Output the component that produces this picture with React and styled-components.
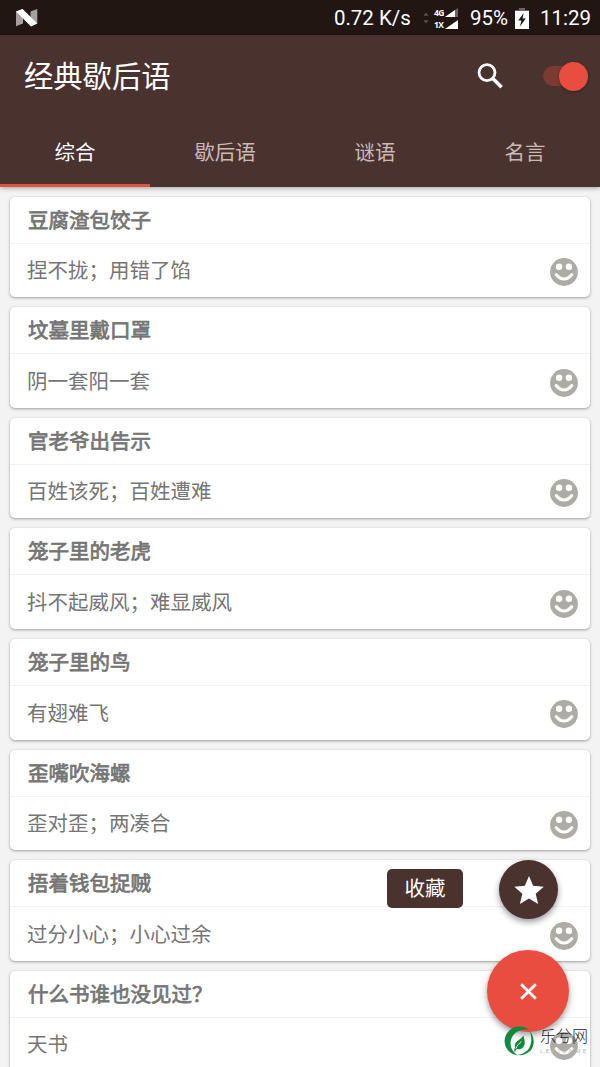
import React from 'react';
import styled, { createGlobalStyle } from 'styled-components';

const riddles = [
  { id: 1, title: '豆腐渣包饺子', answer: '捏不拢；用错了馅' },
  { id: 2, title: '坟墓里戴口罩', answer: '阴一套阳一套' },
  { id: 3, title: '官老爷出告示', answer: '百姓该死；百姓遭难' },
  { id: 4, title: '笼子里的老虎', answer: '抖不起威风；难显威风' },
  { id: 5, title: '笼子里的鸟', answer: '有翅难飞' },
  { id: 6, title: '歪嘴吹海螺', answer: '歪对歪；两凑合' },
  { id: 7, title: '捂着钱包捉贼', answer: '过分小心；小心过余' },
  { id: 8, title: '什么书谁也没见过？', answer: '天书' },
];

const tabs = ['综合', '歇后语', '谜语', '名言'];

const NougatIcon = () => (
  <svg width="22" height="18" viewBox="0 0 22 18">
    <path d="M0 2.6 L7 0 V14.6 L0 17.3Z" fill="#a5a09d" />
    <path d="M14.5 2.6 L21.3 0 V14.6 L14.5 17.3Z" fill="#a5a09d" />
    <path d="M0 2.6 L6.6 0 L21.3 14.6 L15 17.6Z" fill="#fff" />
  </svg>
);

const TrafficIcon = () => (
  <svg width="6" height="12" viewBox="0 0 6 12">
    <path d="M3 0.5 L5.6 3.8 H0.4Z M3 11.5 L5.6 8.2 H0.4Z" fill="#5b514d" />
  </svg>
);

const SignalIcon = ({ weak }) => (
  <svg width="13" height="9" viewBox="0 0 13 9">
    <path d="M13 0 V9 H0Z" fill={weak ? '#6d6461' : '#fff'} />
    {weak && <path d="M10 2.1 V9 H0Z" fill="#fff" />}
  </svg>
);

const BatteryIcon = () => (
  <svg width="14" height="21" viewBox="0 0 14 21">
    <path d="M4 0 H10 V2 H14 V4 H0 V2 H4Z" fill="#6d6461" />
    <path d="M0 3 H14 V21 H0Z" fill="#fff" />
    <path d="M8.6 5 L3.3 12.6 H6.4 L5 18.4 L10.7 10.6 H7.6Z" fill="#211612" />
  </svg>
);

const SearchIcon = () => (
  <svg width="26" height="26" viewBox="0 0 26 26" fill="none" stroke="#fff">
    <circle cx="10" cy="9.6" r="8" strokeWidth="2.8" />
    <path d="M15.6 15.2 L24.6 24.2" strokeWidth="3.6" />
  </svg>
);

const SmileIcon = () => (
  <svg width="28" height="28" viewBox="0 0 28 28">
    <circle cx="14" cy="14" r="13.9" fill="#acaba5" />
    <circle cx="9.1" cy="8.8" r="3.2" fill="#fff" />
    <circle cx="18.9" cy="8.8" r="3.2" fill="#fff" />
    <path d="M6.2 16.6 Q14 25.4 21.8 16.6" fill="none" stroke="#fff" strokeWidth="3.1" strokeLinecap="round" />
  </svg>
);

const StarIcon = () => (
  <svg width="30" height="28" viewBox="2 2 20 19">
    <path d="M12 17.27 18.18 21l-1.64-7.03L22 9.24l-7.19-.61L12 2 9.19 8.63 2 9.24l5.46 4.73L5.82 21z" fill="#fff" />
  </svg>
);

const CloseIcon = () => (
  <svg width="17" height="17" viewBox="0 0 17 17" stroke="#fff" strokeWidth="2.8">
    <path d="M1.2 1.2 L15.8 15.8 M15.8 1.2 L1.2 15.8" />
  </svg>
);

const LeafLogo = () => (
  <svg width="30" height="30" viewBox="0 0 30 30">
    <path d="M25 3.8 C16.4 -2.6 4.4 1 1.2 11 C-1.4 20 4.6 28.4 14 29.4 C8 25.8 5.4 19.6 7 13.8 C9.2 6 17 2.2 25 3.8Z" fill="#108a3c" />
    <path d="M25.6 5 C31.8 11.6 30.8 22.4 23.8 26.8 C20 29.4 16.4 29.8 13 28.6 C19.6 28.4 25 24.6 26.6 18.4 C27.8 13.8 27.4 9 25.6 5Z" fill="#108a3c" />
    <path d="M19.6 9.6 C20 13.4 22.4 18 19 21.4 C17.4 23 15.2 23.4 12.8 23 C12 24 11.4 25.2 10.8 26.4 C10 24.8 10.2 22.8 11 21.4 C9.8 15.4 15.6 14.8 19.6 9.6Z" fill="#108a3c" />
    <path d="M11.8 22.6 C13 19.6 15 17.4 17.4 15.6" stroke="#fff" strokeWidth="0.9" fill="none" />
  </svg>
);

export default function App() {
  return (
    <>
      <GlobalStyle />
      <Screen>
        <StatusBar>
          <NougatIcon />
          <Speed>0.72 K/s</Speed>
          <TrafficIcon />
          <Networks>
            <Network>4G <SignalIcon weak /></Network>
            <Network>1X <SignalIcon /></Network>
          </Networks>
          <Percent>95%</Percent>
          <BatteryIcon />
          <Clock>11:29</Clock>
        </StatusBar>
        <Header>
          <Toolbar>
            <Title>经典歇后语</Title>
            <SearchIcon />
            <Switch><Thumb /></Switch>
          </Toolbar>
          <Tabs>
            {tabs.map((tab, i) => (
              <Tab key={tab} $active={i === 0}>{tab}</Tab>
            ))}
          </Tabs>
        </Header>
        <List>
          {riddles.map(riddle => (
            <Card key={riddle.id}>
              <CardTitle>{riddle.title}</CardTitle>
              <CardBody>
                <Answer>{riddle.answer}</Answer>
                <SmileIcon />
              </CardBody>
            </Card>
          ))}
        </List>
        <FabMenu>
          <FabRow>
            <FabLabel>收藏</FabLabel>
            <MiniFab><StarIcon /></MiniFab>
          </FabRow>
          <Fab><CloseIcon /></Fab>
        </FabMenu>
        <Watermark>
          <LeafLogo />
          <Brand>
            <BrandName>乐兮网</BrandName>
            <BrandUrl>LEXIGAME</BrandUrl>
          </Brand>
        </Watermark>
      </Screen>
    </>
  );
}

const GlobalStyle = createGlobalStyle`
  body {
    margin: 0;
    background: #f3f3f3;
    font-family: Roboto, "Noto Sans CJK SC", sans-serif;
  }
  svg {
    display: block;
    flex: none;
  }
`;

const Screen = styled.div`
  position: relative;
  width: 600px;
  height: 1067px;
  overflow: hidden;
  background: #f3f3f3;
`;

const StatusBar = styled.div`
  display: flex;
  align-items: center;
  box-sizing: border-box;
  height: 35px;
  padding: 1px 9px 0 16px;
  background: #211612;
  color: #fff;
  font-size: 20.5px;
  line-height: 35px;
  white-space: nowrap;
`;

const Speed = styled.span`
  margin-left: auto;
  margin-right: 12px;
`;

const Networks = styled.div`
  display: flex;
  flex-direction: column;
  gap: 3px;
  margin-left: 5px;
`;

const Network = styled.div`
  display: flex;
  align-items: center;
  justify-content: space-between;
  width: 24px;
  height: 9px;
  font-family: "Open Sans", sans-serif;
  font-size: 8.5px;
  font-weight: 700;
  letter-spacing: -0.5px;
  line-height: 9px;
`;

const Percent = styled.span`
  margin: 0 7px 0 12px;
`;

const Clock = styled.span`
  margin-left: 11px;
`;

const Header = styled.header`
  position: relative;
  height: 151.6px;
  background: #4a322e;
  box-shadow: 0 1px 5px rgba(0, 0, 0, 0.35);
`;

const Toolbar = styled.div`
  display: flex;
  align-items: center;
  height: 82px;
  padding: 0 12px 0 24px;
`;

const Title = styled.h1`
  flex: 1;
  margin: 0;
  color: #fff;
  font-size: 29.3px;
  font-weight: 400;
  line-height: 82px;
  padding-top: 2px;
`;

const Switch = styled.div`
  display: flex;
  align-items: center;
  justify-content: flex-end;
  width: 45px;
  height: 20px;
  margin-left: 40px;
  border-radius: 10px;
  background: #7b3a34;
`;

const Thumb = styled.div`
  width: 29px;
  height: 29px;
  border-radius: 50%;
  background: #e84d40;
  box-shadow: 0 1px 3px rgba(0, 0, 0, 0.3);
`;

const Tabs = styled.nav`
  display: flex;
  height: 69.6px;
`;

const Tab = styled.div`
  flex: 1;
  box-sizing: border-box;
  border-bottom: 3px solid ${props => (props.$active ? '#d9534a' : 'transparent')};
  color: ${props => (props.$active ? '#fff' : '#c9bab8')};
  font-size: 20.5px;
  line-height: 72px;
  text-align: center;
`;

const List = styled.main`
  display: flex;
  flex-direction: column;
  gap: 10px;
  padding: 10px 10px 0;
`;

const Card = styled.article`
  flex: none;
  height: 100.6px;
  border-radius: 5px;
  background: #fff;
  box-shadow: 0 1px 3px rgba(0, 0, 0, 0.36);
  color: #757575;
  font-size: 20.5px;
`;

const CardTitle = styled.h2`
  box-sizing: border-box;
  height: 47px;
  margin: 0;
  padding-left: 18px;
  border-bottom: 1px solid #f2f2f2;
  font-size: 20.5px;
  font-weight: 400;
  line-height: 48px;
  -webkit-text-stroke: 0.75px #757575;
`;

const CardBody = styled.div`
  display: flex;
  align-items: center;
  justify-content: space-between;
  height: 54px;
  padding: 0 12px 0 17px;

  svg {
    margin-top: 3px;
  }
`;

const Answer = styled.p`
  margin: 0;
  padding-top: 1.4px;
  line-height: 54px;
`;

const FabMenu = styled.div`
  position: absolute;
  right: 31px;
  bottom: 35px;
  display: flex;
  flex-direction: column;
  align-items: flex-end;
  gap: 31px;
`;

const FabRow = styled.div`
  display: flex;
  align-items: center;
  gap: 36px;
  padding-right: 11px;
`;

const FabLabel = styled.div`
  width: 76px;
  height: 39px;
  margin-bottom: 2px;
  border-radius: 5px;
  background: #4a322e;
  color: #fff;
  font-size: 20.5px;
  line-height: 41px;
  text-align: center;
`;

const RoundButton = styled.div`
  display: flex;
  align-items: center;
  justify-content: center;
  border-radius: 50%;
  box-shadow: 0 3px 6px rgba(0, 0, 0, 0.4);
`;

const MiniFab = styled(RoundButton)`
  width: 59px;
  height: 59px;
  background: #4a322e;
`;

const Fab = styled(RoundButton)`
  width: 82px;
  height: 82px;
  background: #e84d40;
`;

const Watermark = styled.div`
  position: absolute;
  right: 12px;
  bottom: 11px;
  display: flex;
  align-items: center;
  gap: 6px;
`;

const Brand = styled.div`
  width: 48px;
`;

const BrandName = styled.div`
  color: #222;
  font-size: 16px;
  font-weight: 300;
  line-height: 20px;
`;

const BrandUrl = styled.div`
  color: #b5b5b5;
  font-size: 6px;
  letter-spacing: 2.5px;
  line-height: 8px;
  white-space: nowrap;
`;
